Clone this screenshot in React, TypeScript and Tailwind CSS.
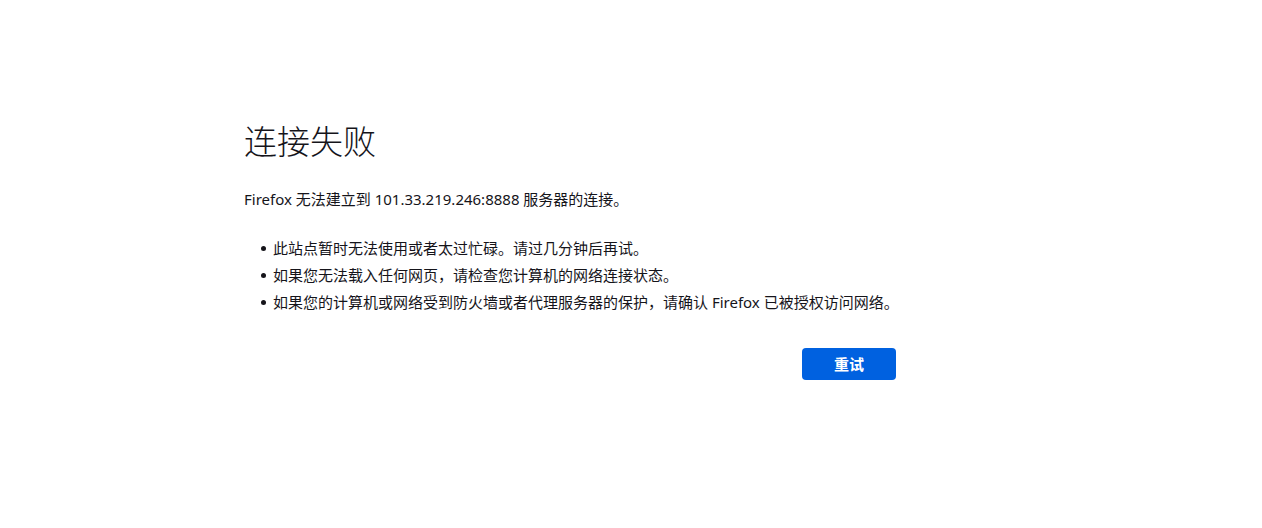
const items = [
  "此站点暂时无法使用或者太过忙碌。请过几分钟后再试。",
  "如果您无法载入任何网页，请检查您计算机的网络连接状态。",
  "如果您的计算机或网络受到防火墙或者代理服务器的保护，请确认 Firefox 已被授权访问网络。",
];

export default function App() {
  const font = { fontFamily: '"Segoe UI", "Noto Sans", "Noto Sans CJK SC", sans-serif' };
  return (
    <div className="w-[1262px] h-[528px] bg-white text-[#15141a]" style={font}>
      <div className="pl-[244px] pt-[118px]">
        <div className="w-[652px]">
          <h1 className="text-[33px] leading-[48px] font-light m-0">连接失败</h1>
          <p className="mt-[21px] text-[15px] leading-[24px]">
            Firefox 无法建立到 101.33.219.246:8888 服务器的连接。
          </p>
          <ul className="mt-[24px] text-[15px]">
            {items.map((t) => (
              <li key={t} className="flex items-center h-[27px] whitespace-nowrap">
                <span className="ml-[17px] mr-[7px] w-[5px] h-[5px] rounded-full bg-[#15141a] shrink-0" />
                <span>{t}</span>
              </li>
            ))}
          </ul>
          <div className="flex justify-end mt-[32px]">
            <button className="w-[94px] h-[32px] rounded-[4px] bg-[#0061e0] text-white text-[15px] font-semibold">
              重试
            </button>
          </div>
        </div>
      </div>
    </div>
  );
}
